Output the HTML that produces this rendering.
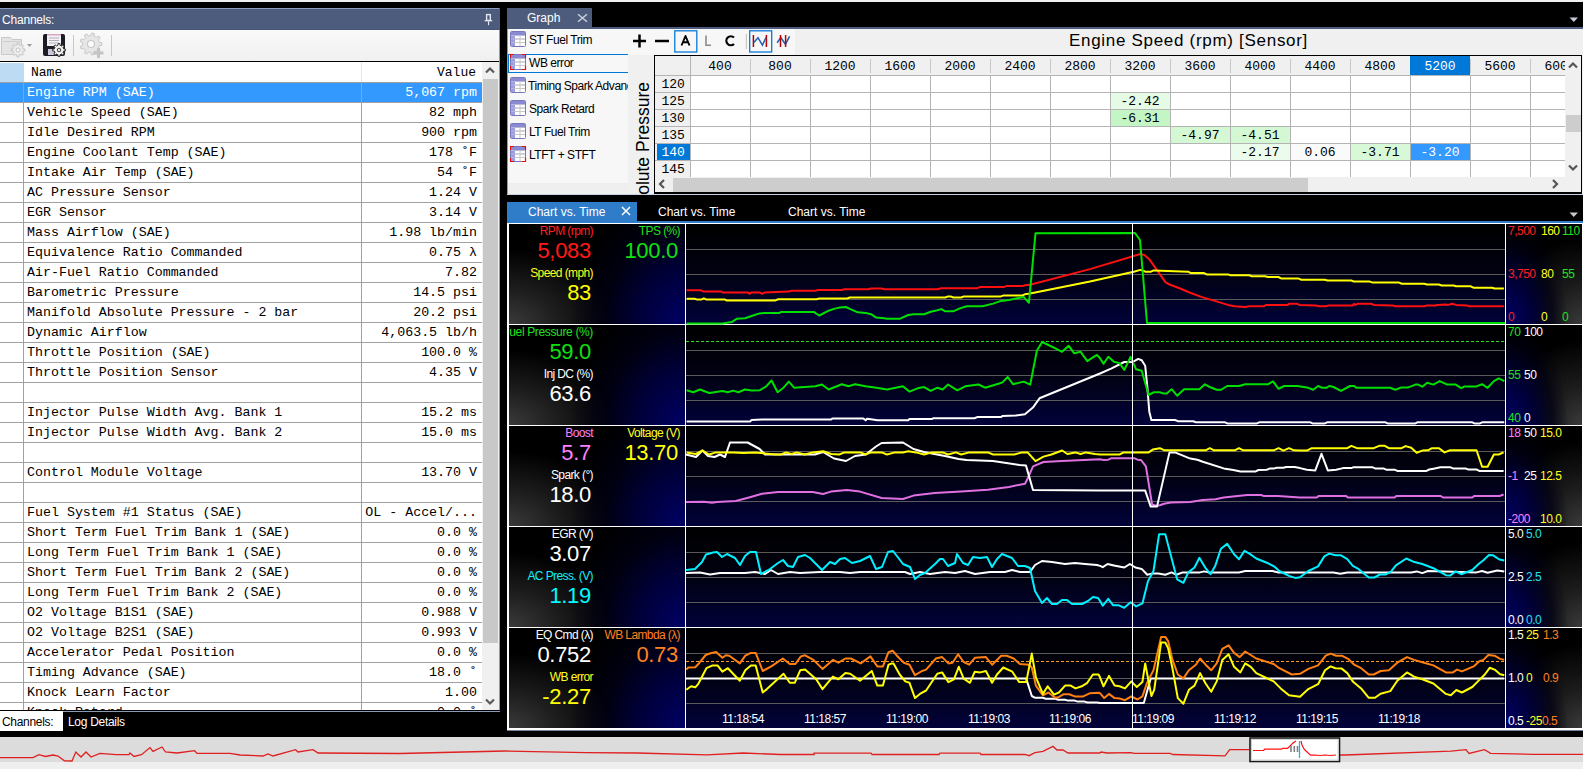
<!DOCTYPE html><html><head><meta charset="utf-8"><style>
*{margin:0;padding:0;box-sizing:border-box}
html,body{width:1583px;height:769px;overflow:hidden;background:#000;font-family:"Liberation Sans", sans-serif}
.abs{position:absolute}
.t{position:absolute;white-space:nowrap;line-height:1}
.mono{font-family:"Liberation Mono", monospace}
</style></head><body>

<div class="abs" style="left:0px;top:0px;width:1583px;height:2px;background:#f0f0f0"></div>
<div class="abs" style="left:0px;top:8px;width:500px;height:22px;background:#4d5c7c"></div>
<div class="abs" style="left:0px;top:8px;width:499px;height:1px;background:#8b9cc0"></div>
<div class="abs" style="left:0px;top:29px;width:499px;height:1px;background:#45557a"></div>
<div class="t" style="left:2px;top:14px;font-size:12px;color:#fff;letter-spacing:-0.2px">Channels:</div>
<svg class="abs" style="left:483px;top:12px" width="12" height="14" viewBox="0 0 12 14"><rect x="3.6" y="2.6" width="3.7" height="5.8" fill="none" stroke="#e2e6f0" stroke-width="1.4"/><rect x="1.7" y="8" width="7.5" height="1.3" fill="#e2e6f0"/><rect x="5" y="9.2" width="1.1" height="4" fill="#e2e6f0"/></svg>
<div class="abs" style="left:0px;top:30px;width:500px;height:31px;background:linear-gradient(#fafafa,#f0f0f0)"></div>
<svg class="abs" style="left:0;top:28px" width="120" height="34" viewBox="0 0 120 34">
<path d="M1.5 9.5h9l2 2h9v15h-20z" fill="#e4e4e4" stroke="#c8c8c8"/>
<path d="M1.5 13.5h20" stroke="#d0d0d0"/>
<path d="M23.08,20.89 L24.93,21.04 L24.93,22.96 L23.08,23.11 L22.38,24.80 L23.58,26.22 L22.22,27.58 L20.80,26.38 L19.11,27.08 L18.96,28.93 L17.04,28.93 L16.89,27.08 L15.20,26.38 L13.78,27.58 L12.42,26.22 L13.62,24.80 L12.92,23.11 L11.07,22.96 L11.07,21.04 L12.92,20.89 L13.62,19.20 L12.42,17.78 L13.78,16.42 L15.20,17.62 L16.89,16.92 L17.04,15.07 L18.96,15.07 L19.11,16.92 L20.80,17.62 L22.22,16.42 L23.58,17.78 L22.38,19.20Z" fill="#ececec" stroke="#c4c4c4" stroke-width="1"/><circle cx="18" cy="22" r="2" fill="#fafafa" stroke="#c4c4c4"/>
<path d="M27 16h5l-2.5 3z" fill="#9a9a9a"/>
<rect x="43" y="6" width="22" height="22" rx="2" fill="#1c1c24"/>
<rect x="47" y="6" width="14" height="12" fill="#f2f2f6"/>
<rect x="47" y="6" width="14" height="1.5" fill="#d8a8c0"/>
<path d="M49 10h10M49 12.5h10M49 15h10" stroke="#a8a8b0" stroke-width="0.9"/>
<rect x="48" y="21" width="6" height="6" fill="#c8c8d8"/>
<path d="M63.69,20.97 L65.44,21.11 L65.44,22.89 L63.69,23.03 L63.04,24.59 L64.18,25.92 L62.92,27.18 L61.59,26.04 L60.03,26.69 L59.89,28.44 L58.11,28.44 L57.97,26.69 L56.41,26.04 L55.08,27.18 L53.82,25.92 L54.96,24.59 L54.31,23.03 L52.56,22.89 L52.56,21.11 L54.31,20.97 L54.96,19.41 L53.82,18.08 L55.08,16.82 L56.41,17.96 L57.97,17.31 L58.11,15.56 L59.89,15.56 L60.03,17.31 L61.59,17.96 L62.92,16.82 L64.18,18.08 L63.04,19.41Z" fill="#f4f4f4" stroke="#333" stroke-width="1"/><circle cx="59" cy="22" r="1.8" fill="#ddd" stroke="#333" stroke-width="0.9"/>
<path d="M73.5 7v21" stroke="#c8c8c8"/>
<path d="M99.34,14.38 L101.92,14.66 L101.92,17.34 L99.34,17.62 L98.43,20.12 L100.23,21.99 L98.50,24.04 L96.35,22.61 L94.05,23.94 L94.22,26.52 L91.58,26.98 L90.85,24.50 L88.23,24.04 L86.70,26.13 L84.38,24.78 L85.42,22.42 L83.71,20.38 L81.20,20.99 L80.28,18.47 L82.60,17.33 L82.60,14.67 L80.28,13.53 L81.20,11.01 L83.71,11.62 L85.42,9.58 L84.38,7.22 L86.70,5.87 L88.23,7.96 L90.85,7.50 L91.58,5.02 L94.22,5.48 L94.05,8.06 L96.35,9.39 L98.50,7.96 L100.23,10.01 L98.43,11.88Z" fill="#e6e6e6" stroke="#c8c8c8" stroke-width="1"/>
<circle cx="91" cy="16" r="3.5" fill="#fbfbfb" stroke="#c8c8c8" stroke-width="1.2"/>
<path d="M98.5 20v10M93.5 25h10" stroke="#c4c4c4" stroke-width="3"/>
<path d="M111.5 7v21" stroke="#c8c8c8"/>
</svg>
<div class="abs" style="left:0px;top:61px;width:500px;height:1px;background:#000"></div>
<div class="abs" style="left:0px;top:62px;width:482px;height:648px;background:#fff"></div>
<div class="abs" style="left:0px;top:63px;width:24px;height:19px;background:#bddcf4"></div>
<div class="t mono" style="left:31px;top:66px;font-size:13px;color:#000;">Name</div>
<div class="t mono" style="right:1107px;top:66px;font-size:13px;color:#000;text-align:right;">Value</div>
<div class="abs" style="left:361px;top:62px;width:1px;height:20px;background:#e6e6e6"></div>
<div class="abs" style="left:0;top:82px;width:482px;height:628px;overflow:hidden">
<div class="abs" style="left:0px;top:1px;width:482px;height:19px;background:#3399ff"></div>
<div class="abs" style="left:0;top:0px;width:482px;height:1px;background:#a0a0a0"></div>
<div class="t mono" style="left:27px;top:4px;font-size:13.3px;color:#fff">Engine RPM (SAE)</div>
<div class="t mono" style="right:5px;top:4px;font-size:13.3px;color:#fff">5,067 rpm</div>
<div class="abs" style="left:0;top:20px;width:482px;height:1px;background:#a0a0a0"></div>
<div class="t mono" style="left:27px;top:24px;font-size:13.3px;color:#000">Vehicle Speed (SAE)</div>
<div class="t mono" style="right:5px;top:24px;font-size:13.3px;color:#000">82 mph</div>
<div class="abs" style="left:0;top:40px;width:482px;height:1px;background:#a0a0a0"></div>
<div class="t mono" style="left:27px;top:44px;font-size:13.3px;color:#000">Idle Desired RPM</div>
<div class="t mono" style="right:5px;top:44px;font-size:13.3px;color:#000">900 rpm</div>
<div class="abs" style="left:0;top:60px;width:482px;height:1px;background:#a0a0a0"></div>
<div class="t mono" style="left:27px;top:64px;font-size:13.3px;color:#000">Engine Coolant Temp (SAE)</div>
<div class="t mono" style="right:5px;top:64px;font-size:13.3px;color:#000">178 &#730;F</div>
<div class="abs" style="left:0;top:80px;width:482px;height:1px;background:#a0a0a0"></div>
<div class="t mono" style="left:27px;top:84px;font-size:13.3px;color:#000">Intake Air Temp (SAE)</div>
<div class="t mono" style="right:5px;top:84px;font-size:13.3px;color:#000">54 &#730;F</div>
<div class="abs" style="left:0;top:100px;width:482px;height:1px;background:#a0a0a0"></div>
<div class="t mono" style="left:27px;top:104px;font-size:13.3px;color:#000">AC Pressure Sensor</div>
<div class="t mono" style="right:5px;top:104px;font-size:13.3px;color:#000">1.24 V</div>
<div class="abs" style="left:0;top:120px;width:482px;height:1px;background:#a0a0a0"></div>
<div class="t mono" style="left:27px;top:124px;font-size:13.3px;color:#000">EGR Sensor</div>
<div class="t mono" style="right:5px;top:124px;font-size:13.3px;color:#000">3.14 V</div>
<div class="abs" style="left:0;top:140px;width:482px;height:1px;background:#a0a0a0"></div>
<div class="t mono" style="left:27px;top:144px;font-size:13.3px;color:#000">Mass Airflow (SAE)</div>
<div class="t mono" style="right:5px;top:144px;font-size:13.3px;color:#000">1.98 lb/min</div>
<div class="abs" style="left:0;top:160px;width:482px;height:1px;background:#a0a0a0"></div>
<div class="t mono" style="left:27px;top:164px;font-size:13.3px;color:#000">Equivalence Ratio Commanded</div>
<div class="t mono" style="right:5px;top:164px;font-size:13.3px;color:#000">0.75 &#955;</div>
<div class="abs" style="left:0;top:180px;width:482px;height:1px;background:#a0a0a0"></div>
<div class="t mono" style="left:27px;top:184px;font-size:13.3px;color:#000">Air-Fuel Ratio Commanded</div>
<div class="t mono" style="right:5px;top:184px;font-size:13.3px;color:#000">7.82</div>
<div class="abs" style="left:0;top:200px;width:482px;height:1px;background:#a0a0a0"></div>
<div class="t mono" style="left:27px;top:204px;font-size:13.3px;color:#000">Barometric Pressure</div>
<div class="t mono" style="right:5px;top:204px;font-size:13.3px;color:#000">14.5 psi</div>
<div class="abs" style="left:0;top:220px;width:482px;height:1px;background:#a0a0a0"></div>
<div class="t mono" style="left:27px;top:224px;font-size:13.3px;color:#000">Manifold Absolute Pressure - 2 bar</div>
<div class="t mono" style="right:5px;top:224px;font-size:13.3px;color:#000">20.2 psi</div>
<div class="abs" style="left:0;top:240px;width:482px;height:1px;background:#a0a0a0"></div>
<div class="t mono" style="left:27px;top:244px;font-size:13.3px;color:#000">Dynamic Airflow</div>
<div class="t mono" style="right:5px;top:244px;font-size:13.3px;color:#000">4,063.5 lb/h</div>
<div class="abs" style="left:0;top:260px;width:482px;height:1px;background:#a0a0a0"></div>
<div class="t mono" style="left:27px;top:264px;font-size:13.3px;color:#000">Throttle Position (SAE)</div>
<div class="t mono" style="right:5px;top:264px;font-size:13.3px;color:#000">100.0 %</div>
<div class="abs" style="left:0;top:280px;width:482px;height:1px;background:#a0a0a0"></div>
<div class="t mono" style="left:27px;top:284px;font-size:13.3px;color:#000">Throttle Position Sensor</div>
<div class="t mono" style="right:5px;top:284px;font-size:13.3px;color:#000">4.35 V</div>
<div class="abs" style="left:0;top:300px;width:482px;height:1px;background:#a0a0a0"></div>
<div class="abs" style="left:0;top:320px;width:482px;height:1px;background:#a0a0a0"></div>
<div class="t mono" style="left:27px;top:324px;font-size:13.3px;color:#000">Injector Pulse Width Avg. Bank 1</div>
<div class="t mono" style="right:5px;top:324px;font-size:13.3px;color:#000">15.2 ms</div>
<div class="abs" style="left:0;top:340px;width:482px;height:1px;background:#a0a0a0"></div>
<div class="t mono" style="left:27px;top:344px;font-size:13.3px;color:#000">Injector Pulse Width Avg. Bank 2</div>
<div class="t mono" style="right:5px;top:344px;font-size:13.3px;color:#000">15.0 ms</div>
<div class="abs" style="left:0;top:360px;width:482px;height:1px;background:#a0a0a0"></div>
<div class="abs" style="left:0;top:380px;width:482px;height:1px;background:#a0a0a0"></div>
<div class="t mono" style="left:27px;top:384px;font-size:13.3px;color:#000">Control Module Voltage</div>
<div class="t mono" style="right:5px;top:384px;font-size:13.3px;color:#000">13.70 V</div>
<div class="abs" style="left:0;top:400px;width:482px;height:1px;background:#a0a0a0"></div>
<div class="abs" style="left:0;top:420px;width:482px;height:1px;background:#a0a0a0"></div>
<div class="t mono" style="left:27px;top:424px;font-size:13.3px;color:#000">Fuel System #1 Status (SAE)</div>
<div class="t mono" style="right:5px;top:424px;font-size:13.3px;color:#000">OL - Accel/...</div>
<div class="abs" style="left:0;top:440px;width:482px;height:1px;background:#a0a0a0"></div>
<div class="t mono" style="left:27px;top:444px;font-size:13.3px;color:#000">Short Term Fuel Trim Bank 1 (SAE)</div>
<div class="t mono" style="right:5px;top:444px;font-size:13.3px;color:#000">0.0 %</div>
<div class="abs" style="left:0;top:460px;width:482px;height:1px;background:#a0a0a0"></div>
<div class="t mono" style="left:27px;top:464px;font-size:13.3px;color:#000">Long Term Fuel Trim Bank 1 (SAE)</div>
<div class="t mono" style="right:5px;top:464px;font-size:13.3px;color:#000">0.0 %</div>
<div class="abs" style="left:0;top:480px;width:482px;height:1px;background:#a0a0a0"></div>
<div class="t mono" style="left:27px;top:484px;font-size:13.3px;color:#000">Short Term Fuel Trim Bank 2 (SAE)</div>
<div class="t mono" style="right:5px;top:484px;font-size:13.3px;color:#000">0.0 %</div>
<div class="abs" style="left:0;top:500px;width:482px;height:1px;background:#a0a0a0"></div>
<div class="t mono" style="left:27px;top:504px;font-size:13.3px;color:#000">Long Term Fuel Trim Bank 2 (SAE)</div>
<div class="t mono" style="right:5px;top:504px;font-size:13.3px;color:#000">0.0 %</div>
<div class="abs" style="left:0;top:520px;width:482px;height:1px;background:#a0a0a0"></div>
<div class="t mono" style="left:27px;top:524px;font-size:13.3px;color:#000">O2 Voltage B1S1 (SAE)</div>
<div class="t mono" style="right:5px;top:524px;font-size:13.3px;color:#000">0.988 V</div>
<div class="abs" style="left:0;top:540px;width:482px;height:1px;background:#a0a0a0"></div>
<div class="t mono" style="left:27px;top:544px;font-size:13.3px;color:#000">O2 Voltage B2S1 (SAE)</div>
<div class="t mono" style="right:5px;top:544px;font-size:13.3px;color:#000">0.993 V</div>
<div class="abs" style="left:0;top:560px;width:482px;height:1px;background:#a0a0a0"></div>
<div class="t mono" style="left:27px;top:564px;font-size:13.3px;color:#000">Accelerator Pedal Position</div>
<div class="t mono" style="right:5px;top:564px;font-size:13.3px;color:#000">0.0 %</div>
<div class="abs" style="left:0;top:580px;width:482px;height:1px;background:#a0a0a0"></div>
<div class="t mono" style="left:27px;top:584px;font-size:13.3px;color:#000">Timing Advance (SAE)</div>
<div class="t mono" style="right:5px;top:584px;font-size:13.3px;color:#000">18.0 &#730;</div>
<div class="abs" style="left:0;top:600px;width:482px;height:1px;background:#a0a0a0"></div>
<div class="t mono" style="left:27px;top:604px;font-size:13.3px;color:#000">Knock Learn Factor</div>
<div class="t mono" style="right:5px;top:604px;font-size:13.3px;color:#000">1.00</div>
<div class="abs" style="left:0;top:620px;width:482px;height:1px;background:#a0a0a0"></div>
<div class="t mono" style="left:27px;top:624px;font-size:13.3px;color:#000">Knock Retard</div>
<div class="t mono" style="right:5px;top:624px;font-size:13.3px;color:#000">0.0 &#730;</div>
<div class="abs" style="left:23px;top:0;width:1px;height:628px;background:#a0a0a0"></div>
<div class="abs" style="left:361px;top:0;width:1px;height:628px;background:#a0a0a0"></div>
</div>
<div class="abs" style="left:482px;top:62px;width:17px;height:648px;background:#f0f0f0"></div>
<div class="abs" style="left:483px;top:79px;width:15px;height:564px;background:#c8c8c8"></div>
<svg class="abs" style="left:484px;top:66px" width="12" height="8"><path d="M2 6.5l4-4 4 4" stroke="#5a5a5a" stroke-width="2.2" fill="none"/></svg>
<svg class="abs" style="left:484px;top:698px" width="12" height="8"><path d="M2 1.5l4 4 4-4" stroke="#5a5a5a" stroke-width="2.2" fill="none"/></svg>
<div class="abs" style="left:499px;top:30px;width:1px;height:681px;background:#8c9bb5"></div>
<div class="abs" style="left:0px;top:710px;width:500px;height:1px;background:#000"></div>
<div class="abs" style="left:63px;top:711px;width:437px;height:1px;background:#8c9bb5"></div>
<div class="abs" style="left:0px;top:712px;width:500px;height:25px;background:#000"></div>
<div class="abs" style="left:0px;top:711px;width:63px;height:20px;background:#fff"></div>
<div class="t" style="left:2px;top:716px;font-size:12px;color:#000;letter-spacing:-0.3px">Channels:</div>
<div class="t" style="left:68px;top:716px;font-size:12px;color:#fff;letter-spacing:-0.3px">Log Details</div>
<div class="abs" style="left:0px;top:737px;width:1583px;height:25px;background:#dcdcdc"></div>
<div class="abs" style="left:0px;top:762px;width:1583px;height:7px;background:#efefef"></div>
<svg class="abs" style="left:0;top:0" width="1583" height="769"><polyline points="0,757.7 33,757.7 39,754.7 45.5,756.5 53,755 58,756 64.4,760.8 72,761 75.8,752 81,757 86,752 91,757 100,753.4 116,754.7 129,754.7 130,753 134,756.5 141.5,754.7 150,747.6 153,751.4 162,747 165.5,752 177,753 194.6,750.7 197,753.4 230,753.4 240,755 263,756 268,754 273,756 295.6,749.7 298,752 313,749.7 318,753 400,753.5 505,751 586,752.7 637,753 707,754.8 743,753 780,754.5 814,754.5 814,753.2 871,753.2 872,754.5 939,754.5 940,753.2 980,753.2 981,754.5 1025,754.5 1029,755.7 1035,752.7 1043,751.4 1053,746.4 1057,750 1063,750 1068,753 1100,753 1101,752 1107,753 1131,752.7 1134,753.4 1170,753.4 1173,754.5 1225,755.8 1229.7,749.7 1249,749.7" fill="none" stroke="#e02020" stroke-width="1.3"/><polyline points="1339,755 1345,755 1451,751.2 1466,749.7 1469,753.4 1484.5,749.7 1490.6,753.4 1533,754.3 1583,754.3" fill="none" stroke="#e02020" stroke-width="1.3"/>
<rect x="1250" y="738" width="89.5" height="23.5" fill="#fff" stroke="#1a1a1a" stroke-width="1.6"/><rect x="1251.5" y="739.5" width="86.5" height="20.5" fill="none" stroke="#d4d4d4" stroke-width="1"/>
<polyline points="1253,750.5 1263.7,750.5 1264.5,749.2 1281.7,749.2 1282.5,748.4 1287.5,748.4 1293,743 1296,741" fill="none" stroke="#ff1010" stroke-width="1.2"/><polyline points="1301,741 1302,745 1304,749 1306,751 1310.5,755.2 1315,755 1320,755.5 1325,755 1330,755.5 1336,755" fill="none" stroke="#ff1010" stroke-width="1.2"/>
<path d="M1291 746v6M1294.3 746v6M1297.5 746v6" stroke="#808080" stroke-width="1.6"/><path d="M1299.5 741v17" stroke="#20b0f0" stroke-width="1.3"/>
</svg>
<div class="abs" style="left:507px;top:8px;width:85px;height:19px;background:#4d5c7c"></div>
<div class="t" style="left:527px;top:12px;font-size:12px;color:#fff;">Graph</div>
<svg class="abs" style="left:576.5px;top:13px" width="11" height="10"><path d="M1 1.2l9 7.6M10 1.2l-9 7.6" stroke="#c8cfdc" stroke-width="1.5"/></svg>
<svg class="abs" style="left:1569px;top:17px" width="10" height="6"><path d="M0.5 0.5h8.5l-4.25 4.5z" fill="#c4cbd8"/></svg>
<div class="abs" style="left:507px;top:27px;width:1076px;height:2px;background:#4d5c7c"></div>
<div class="abs" style="left:507px;top:29px;width:1076px;height:166px;background:#f0f0f0"></div>
<div class="abs" style="left:508px;top:29px;width:120px;height:166px;background:#f7f7f7"></div>
<div class="abs" style="left:508px;top:183px;width:120px;height:12px;background:#efefef"></div>
<div class="abs" style="left:508px;top:29px;width:120px;height:166px;overflow:hidden">
<svg class="abs" style="left:2px;top:2px" width="17" height="16" viewBox="0 0 17 16"><rect x="0.5" y="0.5" width="15" height="15" rx="1" fill="#fff" stroke="#7878b8"/><rect x="1" y="1" width="14" height="3" fill="#8a8ad4"/><rect x="1" y="4" width="4" height="11" fill="#9c9ce0"/><path d="M1 4.5h14M1 8h14M1 11.5h14" stroke="#b8b8d8"/><path d="M5 8h10M5 11.5h10M10 4v11" stroke="#c8c8c8"/></svg>
<div class="t" style="left:21px;top:5px;font-size:12px;color:#000;letter-spacing:-0.45px">ST Fuel Trim</div>
<div class="abs" style="left:0;top:25px;width:130px;height:19px;border:1px solid #0078d7;border-right:none"></div>
<svg class="abs" style="left:2px;top:25px" width="17" height="16" viewBox="0 0 17 16"><rect x="0.5" y="0.5" width="15" height="15" rx="1" fill="#fff" stroke="#7878b8"/><rect x="1" y="1" width="14" height="3" fill="#8a8ad4"/><rect x="1" y="4" width="4" height="11" fill="#9c9ce0"/><path d="M1 4.5h14M1 8h14M1 11.5h14" stroke="#b8b8d8"/><path d="M5 8h10M5 11.5h10M10 4v11" stroke="#c8c8c8"/><path d="M0.5 4V0.5H4M12 0.5h3.5V4M0.5 12v3.5H4M12 15.5h3.5V12" stroke="#e01010" stroke-width="1.2" fill="none"/></svg>
<div class="t" style="left:21px;top:28px;font-size:12px;color:#000;letter-spacing:-0.45px">WB error</div>
<svg class="abs" style="left:2px;top:48px" width="17" height="16" viewBox="0 0 17 16"><rect x="0.5" y="0.5" width="15" height="15" rx="1" fill="#fff" stroke="#7878b8"/><rect x="1" y="1" width="14" height="3" fill="#8a8ad4"/><rect x="1" y="4" width="4" height="11" fill="#9c9ce0"/><path d="M1 4.5h14M1 8h14M1 11.5h14" stroke="#b8b8d8"/><path d="M5 8h10M5 11.5h10M10 4v11" stroke="#c8c8c8"/></svg>
<div class="t" style="left:20px;top:51px;font-size:12px;color:#000;letter-spacing:-0.45px">Timing Spark Advance</div>
<svg class="abs" style="left:2px;top:71px" width="17" height="16" viewBox="0 0 17 16"><rect x="0.5" y="0.5" width="15" height="15" rx="1" fill="#fff" stroke="#7878b8"/><rect x="1" y="1" width="14" height="3" fill="#8a8ad4"/><rect x="1" y="4" width="4" height="11" fill="#9c9ce0"/><path d="M1 4.5h14M1 8h14M1 11.5h14" stroke="#b8b8d8"/><path d="M5 8h10M5 11.5h10M10 4v11" stroke="#c8c8c8"/></svg>
<div class="t" style="left:21px;top:74px;font-size:12px;color:#000;letter-spacing:-0.45px">Spark Retard</div>
<svg class="abs" style="left:2px;top:94px" width="17" height="16" viewBox="0 0 17 16"><rect x="0.5" y="0.5" width="15" height="15" rx="1" fill="#fff" stroke="#7878b8"/><rect x="1" y="1" width="14" height="3" fill="#8a8ad4"/><rect x="1" y="4" width="4" height="11" fill="#9c9ce0"/><path d="M1 4.5h14M1 8h14M1 11.5h14" stroke="#b8b8d8"/><path d="M5 8h10M5 11.5h10M10 4v11" stroke="#c8c8c8"/></svg>
<div class="t" style="left:21px;top:97px;font-size:12px;color:#000;letter-spacing:-0.45px">LT Fuel Trim</div>
<svg class="abs" style="left:2px;top:117px" width="17" height="16" viewBox="0 0 17 16"><rect x="0.5" y="0.5" width="15" height="15" rx="1" fill="#fff" stroke="#7878b8"/><rect x="1" y="1" width="14" height="3" fill="#8a8ad4"/><rect x="1" y="4" width="4" height="11" fill="#9c9ce0"/><path d="M1 4.5h14M1 8h14M1 11.5h14" stroke="#b8b8d8"/><path d="M5 8h10M5 11.5h10M10 4v11" stroke="#c8c8c8"/><path d="M0.5 4V0.5H4M12 0.5h3.5V4M0.5 12v3.5H4M12 15.5h3.5V12" stroke="#e01010" stroke-width="1.2" fill="none"/></svg>
<div class="t" style="left:21px;top:120px;font-size:12px;color:#000;letter-spacing:-0.45px">LTFT + STFT</div>
</div>
<div class="abs" style="left:628px;top:29px;width:167px;height:26px;background:#f7f7f7"></div>
<svg class="abs" style="left:628px;top:29px" width="170" height="26" viewBox="0 0 170 26">
<path d="M5 12h13M11.5 5.5v13" stroke="#000" stroke-width="2.5"/>
<path d="M27 12h14" stroke="#000" stroke-width="2.5"/>
<rect x="46.8" y="1.8" width="22" height="21.2" fill="none" stroke="#0a78d8" stroke-width="1.3"/>
<path d="M53.5 16.5l4-9.5 4 9.5M55.2 13.3h4.6" stroke="#000" stroke-width="1.9" fill="none" stroke-linejoin="round"/>
<path d="M78 6.5v9.8h5" stroke="#8a8a8a" stroke-width="1.6" fill="none"/>
<path d="M106 8.5a4.5 4.5 0 1 0 0 6.5" stroke="#000" stroke-width="2.2" fill="none"/>
<path d="M118.4 5v15" stroke="#c8c8c8" stroke-width="1.2"/>
<rect x="121.7" y="1.8" width="22" height="21.2" fill="none" stroke="#0a78d8" stroke-width="1.3"/>
<path d="M125.4 6v12M138.4 6v12" stroke="#b00000" stroke-width="1.5"/><path d="M125.8 13.4L130 8.7L134.4 16.2L138 8.5" stroke="#2060b0" stroke-width="1.5" fill="none"/>
<path d="M149.1 13.7L152.8 8.5L157.4 15.2L161.6 7.3" stroke="#2060b0" stroke-width="1.5" fill="none"/><path d="M152.5 6v12M157.6 6v12" stroke="#c00000" stroke-width="1.5"/>
</svg>
<div class="t" style="left:795px;top:31.8px;width:787px;text-align:center;font-size:17px;color:#000;letter-spacing:0.7px">Engine Speed (rpm) [Sensor]</div>
<div class="abs" style="left:628px;top:55px;width:26px;height:140px;overflow:hidden"><div class="t" style="left:7.4px;top:427px;width:400px;text-align:right;font-size:17.5px;color:#000;transform-origin:0 0;transform:rotate(-90deg)">Manifold Absolute Pressure</div></div>
<div class="abs" style="left:654px;top:55px;width:928px;height:139px;background:#000"></div>
<div class="abs" style="left:655px;top:56px;width:910px;height:121px;background:#fff"></div>
<div class="abs" style="left:655px;top:56px;width:910px;height:20px;background:#f0f0f0"></div>
<div class="abs" style="left:655px;top:76px;width:35px;height:101px;background:#f0f0f0"></div>
<div class="abs" style="left:655px;top:56px;width:910px;height:121px;overflow:hidden">
<div class="abs" style="left:455px;top:37px;width:60px;height:17px;background:#e6fbe6"></div>
<div class="t mono" style="left:455px;top:39px;width:60px;text-align:center;font-size:13px;color:#000">-2.42</div>
<div class="abs" style="left:455px;top:54px;width:60px;height:17px;background:#c4f5c4"></div>
<div class="t mono" style="left:455px;top:56px;width:60px;text-align:center;font-size:13px;color:#000">-6.31</div>
<div class="abs" style="left:515px;top:71px;width:60px;height:17px;background:#d4f8d4"></div>
<div class="t mono" style="left:515px;top:73px;width:60px;text-align:center;font-size:13px;color:#000">-4.97</div>
<div class="abs" style="left:575px;top:71px;width:60px;height:17px;background:#d4f8d4"></div>
<div class="t mono" style="left:575px;top:73px;width:60px;text-align:center;font-size:13px;color:#000">-4.51</div>
<div class="abs" style="left:575px;top:88px;width:60px;height:17px;background:#ecfcec"></div>
<div class="t mono" style="left:575px;top:90px;width:60px;text-align:center;font-size:13px;color:#000">-2.17</div>
<div class="abs" style="left:635px;top:88px;width:60px;height:17px;background:#fafafa"></div>
<div class="t mono" style="left:635px;top:90px;width:60px;text-align:center;font-size:13px;color:#000">0.06</div>
<div class="abs" style="left:695px;top:88px;width:60px;height:17px;background:#d8f9d8"></div>
<div class="t mono" style="left:695px;top:90px;width:60px;text-align:center;font-size:13px;color:#000">-3.71</div>
<div class="abs" style="left:755px;top:88px;width:60px;height:17px;background:#3399ff"></div>
<div class="t mono" style="left:755px;top:90px;width:60px;text-align:center;font-size:13px;color:#fff">-3.20</div>
<div class="t mono" style="left:35px;top:4px;width:60px;text-align:center;font-size:13px;color:#000">400</div>
<div class="abs" style="left:95px;top:3px;width:1px;height:14px;background:#c8c8c8"></div>
<div class="abs" style="left:95px;top:20px;width:1px;height:101px;background:#b4b4b4"></div>
<div class="t mono" style="left:95px;top:4px;width:60px;text-align:center;font-size:13px;color:#000">800</div>
<div class="abs" style="left:155px;top:3px;width:1px;height:14px;background:#c8c8c8"></div>
<div class="abs" style="left:155px;top:20px;width:1px;height:101px;background:#b4b4b4"></div>
<div class="t mono" style="left:155px;top:4px;width:60px;text-align:center;font-size:13px;color:#000">1200</div>
<div class="abs" style="left:215px;top:3px;width:1px;height:14px;background:#c8c8c8"></div>
<div class="abs" style="left:215px;top:20px;width:1px;height:101px;background:#b4b4b4"></div>
<div class="t mono" style="left:215px;top:4px;width:60px;text-align:center;font-size:13px;color:#000">1600</div>
<div class="abs" style="left:275px;top:3px;width:1px;height:14px;background:#c8c8c8"></div>
<div class="abs" style="left:275px;top:20px;width:1px;height:101px;background:#b4b4b4"></div>
<div class="t mono" style="left:275px;top:4px;width:60px;text-align:center;font-size:13px;color:#000">2000</div>
<div class="abs" style="left:335px;top:3px;width:1px;height:14px;background:#c8c8c8"></div>
<div class="abs" style="left:335px;top:20px;width:1px;height:101px;background:#b4b4b4"></div>
<div class="t mono" style="left:335px;top:4px;width:60px;text-align:center;font-size:13px;color:#000">2400</div>
<div class="abs" style="left:395px;top:3px;width:1px;height:14px;background:#c8c8c8"></div>
<div class="abs" style="left:395px;top:20px;width:1px;height:101px;background:#b4b4b4"></div>
<div class="t mono" style="left:395px;top:4px;width:60px;text-align:center;font-size:13px;color:#000">2800</div>
<div class="abs" style="left:455px;top:3px;width:1px;height:14px;background:#c8c8c8"></div>
<div class="abs" style="left:455px;top:20px;width:1px;height:101px;background:#b4b4b4"></div>
<div class="t mono" style="left:455px;top:4px;width:60px;text-align:center;font-size:13px;color:#000">3200</div>
<div class="abs" style="left:515px;top:3px;width:1px;height:14px;background:#c8c8c8"></div>
<div class="abs" style="left:515px;top:20px;width:1px;height:101px;background:#b4b4b4"></div>
<div class="t mono" style="left:515px;top:4px;width:60px;text-align:center;font-size:13px;color:#000">3600</div>
<div class="abs" style="left:575px;top:3px;width:1px;height:14px;background:#c8c8c8"></div>
<div class="abs" style="left:575px;top:20px;width:1px;height:101px;background:#b4b4b4"></div>
<div class="t mono" style="left:575px;top:4px;width:60px;text-align:center;font-size:13px;color:#000">4000</div>
<div class="abs" style="left:635px;top:3px;width:1px;height:14px;background:#c8c8c8"></div>
<div class="abs" style="left:635px;top:20px;width:1px;height:101px;background:#b4b4b4"></div>
<div class="t mono" style="left:635px;top:4px;width:60px;text-align:center;font-size:13px;color:#000">4400</div>
<div class="abs" style="left:695px;top:3px;width:1px;height:14px;background:#c8c8c8"></div>
<div class="abs" style="left:695px;top:20px;width:1px;height:101px;background:#b4b4b4"></div>
<div class="t mono" style="left:695px;top:4px;width:60px;text-align:center;font-size:13px;color:#000">4800</div>
<div class="abs" style="left:755px;top:3px;width:1px;height:14px;background:#c8c8c8"></div>
<div class="abs" style="left:755px;top:20px;width:1px;height:101px;background:#b4b4b4"></div>
<div class="abs" style="left:755px;top:0;width:60px;height:20px;background:#0078d7"></div>
<div class="t mono" style="left:755px;top:4px;width:60px;text-align:center;font-size:13px;color:#fff">5200</div>
<div class="abs" style="left:815px;top:3px;width:1px;height:14px;background:#c8c8c8"></div>
<div class="abs" style="left:815px;top:20px;width:1px;height:101px;background:#b4b4b4"></div>
<div class="t mono" style="left:815px;top:4px;width:60px;text-align:center;font-size:13px;color:#000">5600</div>
<div class="abs" style="left:875px;top:3px;width:1px;height:14px;background:#c8c8c8"></div>
<div class="abs" style="left:875px;top:20px;width:1px;height:101px;background:#b4b4b4"></div>
<div class="t mono" style="left:875px;top:4px;width:60px;text-align:center;font-size:13px;color:#000">6000</div>
<div class="abs" style="left:935px;top:3px;width:1px;height:14px;background:#c8c8c8"></div>
<div class="abs" style="left:935px;top:20px;width:1px;height:101px;background:#b4b4b4"></div>
<div class="t mono" style="left:6.5px;top:22px;font-size:13px;color:#000">120</div>
<div class="abs" style="left:0;top:36px;width:910px;height:1px;background:#b4b4b4"></div>
<div class="t mono" style="left:6.5px;top:39px;font-size:13px;color:#000">125</div>
<div class="abs" style="left:0;top:53px;width:910px;height:1px;background:#b4b4b4"></div>
<div class="t mono" style="left:6.5px;top:56px;font-size:13px;color:#000">130</div>
<div class="abs" style="left:0;top:70px;width:910px;height:1px;background:#b4b4b4"></div>
<div class="t mono" style="left:6.5px;top:73px;font-size:13px;color:#000">135</div>
<div class="abs" style="left:0;top:87px;width:910px;height:1px;background:#b4b4b4"></div>
<div class="abs" style="left:2px;top:88px;width:33px;height:17px;background:#0078d7"></div>
<div class="t mono" style="left:6.5px;top:90px;font-size:13px;color:#fff">140</div>
<div class="abs" style="left:0;top:104px;width:910px;height:1px;background:#b4b4b4"></div>
<div class="t mono" style="left:6.5px;top:107px;font-size:13px;color:#000">145</div>
<div class="abs" style="left:0;top:121px;width:910px;height:1px;background:#b4b4b4"></div>
<div class="abs" style="left:0;top:19px;width:910px;height:1px;background:#b4b4b4"></div>
<div class="abs" style="left:35px;top:0;width:1px;height:121px;background:#b4b4b4"></div>
</div>
<div class="abs" style="left:1565px;top:56px;width:16px;height:121px;background:#f0f0f0"></div>
<div class="abs" style="left:1566px;top:115px;width:15px;height:17px;background:#cdcdcd"></div>
<svg class="abs" style="left:1567px;top:61px" width="12" height="8"><path d="M2 6.5l4-4 4 4" stroke="#555" stroke-width="2.2" fill="none"/></svg>
<svg class="abs" style="left:1567px;top:164px" width="12" height="8"><path d="M2 1.5l4 4 4-4" stroke="#555" stroke-width="2.2" fill="none"/></svg>
<div class="abs" style="left:655px;top:177px;width:926px;height:15px;background:#f0f0f0"></div>
<div class="abs" style="left:673px;top:178px;width:635px;height:14px;background:#cdcdcd"></div>
<svg class="abs" style="left:657px;top:179px" width="10" height="10"><path d="M7 1L3 5l4 4" stroke="#555" stroke-width="2.2" fill="none"/></svg>
<svg class="abs" style="left:1550px;top:179px" width="10" height="10"><path d="M3 1l4 4-4 4" stroke="#555" stroke-width="2.2" fill="none"/></svg>
<div class="abs" style="left:507px;top:29px;width:1px;height:166px;background:#8c9bb5"></div>
<div class="abs" style="left:507px;top:194px;width:1076px;height:1px;background:#c8d2e4"></div>
<div class="abs" style="left:507px;top:202px;width:130px;height:20px;background:#2f7dc8"></div>
<div class="t" style="left:528px;top:206px;font-size:12px;color:#fff;">Chart vs. Time</div>
<svg class="abs" style="left:621px;top:206px" width="10" height="10"><path d="M1 1l8 8M9 1l-8 8" stroke="#fff" stroke-width="1.5"/></svg>
<div class="t" style="left:658px;top:206px;font-size:12px;color:#fff;">Chart vs. Time</div>
<div class="t" style="left:788px;top:206px;font-size:12px;color:#fff;">Chart vs. Time</div>
<svg class="abs" style="left:1569px;top:212px" width="10" height="6"><path d="M0.5 0.5h8.5l-4.25 4.5z" fill="#c8c8c8"/></svg>
<div class="abs" style="left:507px;top:221px;width:1076px;height:2px;background:#2f7dc8"></div>
<div class="abs" style="left:507px;top:223px;width:1076px;height:507px;background:#fff"></div>
<div class="abs" style="left:509px;top:224px;width:176px;height:100px;background:radial-gradient(ellipse 115px 135px at 100% 100%, #000066 0%, #00003a 40%, rgba(0,0,22,0.75) 70%, rgba(0,0,0,0) 100%), radial-gradient(ellipse 105px 75px at 0% 100%, #3a3a3a 0%, #1e1e1e 45%, rgba(0,0,0,0) 100%), #000"></div>
<div class="abs" style="left:686px;top:224px;width:819px;height:100px;background:linear-gradient(#000 0%, #010112 50%, #02023a 100%)"></div>
<div class="abs" style="left:1506px;top:224px;width:76px;height:100px;background:radial-gradient(ellipse 62px 105px at 0% 100%, #000066 0%, #00003c 40%, rgba(0,0,20,0.7) 75%, rgba(0,0,0,0) 100%), radial-gradient(ellipse 75px 85px at 100% 100%, #3a3a3a 0%, #1c1c1c 45%, rgba(0,0,0,0) 100%), #000"></div>
<div class="abs" style="left:509px;top:325px;width:176px;height:100px;background:radial-gradient(ellipse 115px 135px at 100% 100%, #000066 0%, #00003a 40%, rgba(0,0,22,0.75) 70%, rgba(0,0,0,0) 100%), radial-gradient(ellipse 105px 75px at 0% 100%, #3a3a3a 0%, #1e1e1e 45%, rgba(0,0,0,0) 100%), #000"></div>
<div class="abs" style="left:686px;top:325px;width:819px;height:100px;background:linear-gradient(#000 0%, #010112 50%, #02023a 100%)"></div>
<div class="abs" style="left:1506px;top:325px;width:76px;height:100px;background:radial-gradient(ellipse 62px 105px at 0% 100%, #000066 0%, #00003c 40%, rgba(0,0,20,0.7) 75%, rgba(0,0,0,0) 100%), radial-gradient(ellipse 75px 85px at 100% 100%, #3a3a3a 0%, #1c1c1c 45%, rgba(0,0,0,0) 100%), #000"></div>
<div class="abs" style="left:509px;top:426px;width:176px;height:100px;background:radial-gradient(ellipse 115px 135px at 100% 100%, #000066 0%, #00003a 40%, rgba(0,0,22,0.75) 70%, rgba(0,0,0,0) 100%), radial-gradient(ellipse 105px 75px at 0% 100%, #3a3a3a 0%, #1e1e1e 45%, rgba(0,0,0,0) 100%), #000"></div>
<div class="abs" style="left:686px;top:426px;width:819px;height:100px;background:linear-gradient(#000 0%, #010112 50%, #02023a 100%)"></div>
<div class="abs" style="left:1506px;top:426px;width:76px;height:100px;background:radial-gradient(ellipse 62px 105px at 0% 100%, #000066 0%, #00003c 40%, rgba(0,0,20,0.7) 75%, rgba(0,0,0,0) 100%), radial-gradient(ellipse 75px 85px at 100% 100%, #3a3a3a 0%, #1c1c1c 45%, rgba(0,0,0,0) 100%), #000"></div>
<div class="abs" style="left:509px;top:527px;width:176px;height:100px;background:radial-gradient(ellipse 115px 135px at 100% 100%, #000066 0%, #00003a 40%, rgba(0,0,22,0.75) 70%, rgba(0,0,0,0) 100%), radial-gradient(ellipse 105px 75px at 0% 100%, #3a3a3a 0%, #1e1e1e 45%, rgba(0,0,0,0) 100%), #000"></div>
<div class="abs" style="left:686px;top:527px;width:819px;height:100px;background:linear-gradient(#000 0%, #010112 50%, #02023a 100%)"></div>
<div class="abs" style="left:1506px;top:527px;width:76px;height:100px;background:radial-gradient(ellipse 62px 105px at 0% 100%, #000066 0%, #00003c 40%, rgba(0,0,20,0.7) 75%, rgba(0,0,0,0) 100%), radial-gradient(ellipse 75px 85px at 100% 100%, #3a3a3a 0%, #1c1c1c 45%, rgba(0,0,0,0) 100%), #000"></div>
<div class="abs" style="left:509px;top:628px;width:176px;height:100px;background:radial-gradient(ellipse 115px 135px at 100% 100%, #000066 0%, #00003a 40%, rgba(0,0,22,0.75) 70%, rgba(0,0,0,0) 100%), radial-gradient(ellipse 105px 75px at 0% 100%, #3a3a3a 0%, #1e1e1e 45%, rgba(0,0,0,0) 100%), #000"></div>
<div class="abs" style="left:686px;top:628px;width:819px;height:100px;background:linear-gradient(#000 0%, #010112 50%, #02023a 100%)"></div>
<div class="abs" style="left:1506px;top:628px;width:76px;height:100px;background:radial-gradient(ellipse 62px 105px at 0% 100%, #000066 0%, #00003c 40%, rgba(0,0,20,0.7) 75%, rgba(0,0,0,0) 100%), radial-gradient(ellipse 75px 85px at 100% 100%, #3a3a3a 0%, #1c1c1c 45%, rgba(0,0,0,0) 100%), #000"></div>
<div class="abs" style="left:507px;top:728px;width:1076px;height:2px;background:#fff"></div>
<div class="abs" style="left:507px;top:730px;width:1076px;height:1px;background:#6f7f9f"></div>
<svg class="abs" style="left:0;top:0" width="1583" height="769">
<line x1="686" x2="1505" y1="249.5" y2="249.5" stroke="#5a5a5a" stroke-width="1"/>
<line x1="686" x2="1505" y1="274.5" y2="274.5" stroke="#5a5a5a" stroke-width="1"/>
<line x1="686" x2="1505" y1="299.5" y2="299.5" stroke="#5a5a5a" stroke-width="1"/>
<line x1="686" x2="1505" y1="350.5" y2="350.5" stroke="#5a5a5a" stroke-width="1"/>
<line x1="686" x2="1505" y1="375.5" y2="375.5" stroke="#5a5a5a" stroke-width="1"/>
<line x1="686" x2="1505" y1="400.5" y2="400.5" stroke="#5a5a5a" stroke-width="1"/>
<line x1="686" x2="1505" y1="451.5" y2="451.5" stroke="#5a5a5a" stroke-width="1"/>
<line x1="686" x2="1505" y1="476.5" y2="476.5" stroke="#5a5a5a" stroke-width="1"/>
<line x1="686" x2="1505" y1="501.5" y2="501.5" stroke="#5a5a5a" stroke-width="1"/>
<line x1="686" x2="1505" y1="552.5" y2="552.5" stroke="#5a5a5a" stroke-width="1"/>
<line x1="686" x2="1505" y1="577.5" y2="577.5" stroke="#5a5a5a" stroke-width="1"/>
<line x1="686" x2="1505" y1="602.5" y2="602.5" stroke="#5a5a5a" stroke-width="1"/>
<line x1="686" x2="1505" y1="653.5" y2="653.5" stroke="#5a5a5a" stroke-width="1"/>
<line x1="686" x2="1505" y1="678.5" y2="678.5" stroke="#5a5a5a" stroke-width="1"/>
<line x1="686" x2="1505" y1="703.5" y2="703.5" stroke="#5a5a5a" stroke-width="1"/>
<line x1="686" x2="1505" y1="341.5" y2="341.5" stroke="#20e020" stroke-width="1" stroke-dasharray="3 2"/>
<line x1="686" x2="1505" y1="661.5" y2="661.5" stroke="#ff9a20" stroke-width="1" stroke-dasharray="3 2"/>
<polyline points="686.6,290.3 701.2,290.3 703.9,291.6 721.1,291.6 722.5,292.4 747.7,292.4 749.5,293.8 751.6,292.4 759.6,292.4 762.2,293.8 764.9,292.4 788.8,291.6 791.4,290.8 815.3,290.8 818.0,290.0 841.8,290.0 844.5,289.2 868.4,289.2 871.0,288.5 881.6,288.5 884.3,289.2 937.4,289.2 941.3,288.2 977.2,288.2 979.8,287.1 1003.7,287.1 1006.3,286.1 1022.3,286.1 1024.9,285.3 1030.2,284.7 1090.0,269.1 1140.4,254.0 1144.4,255.0 1149.7,259.8 1156.3,269.1 1165.6,282.4 1169.6,284.5 1180.2,288.5 1190.8,293.0 1201.4,296.9 1214.7,300.9 1228.0,304.9 1234.6,306.2 1245.2,307.0 1249.2,306.2 1263.8,306.2 1266.4,304.9 1287.7,304.9 1289.0,303.8 1297.0,303.8 1299.6,304.9 1315.5,305.4 1319.5,306.2 1326.1,306.2 1328.8,305.4 1352.7,305.4 1354.0,303.8 1355.3,304.9 1358.0,303.8 1371.2,303.8 1373.9,304.9 1392.5,305.4 1395.1,306.2 1424.3,306.2 1427.0,305.4 1434.9,305.4 1437.6,304.9 1445.5,304.4 1448.2,304.9 1452.2,303.8 1456.1,304.9 1466.8,305.4 1469.4,306.2 1503.9,306.2" fill="none" stroke="#ff1010" stroke-width="2" stroke-linejoin="round"/>
<polyline points="686.6,298.8 694.6,298.8 697.2,299.6 701.2,299.6 703.9,298.3 706.5,299.6 725.1,299.6 726.4,300.4 775.5,300.4 778.2,299.3 816.6,299.3 819.3,298.5 847.2,298.5 849.8,297.5 945.3,297.5 948.0,296.4 950.6,296.4 953.3,297.5 961.2,297.5 963.9,296.4 1001.0,296.4 1003.7,295.4 1022.3,295.4 1024.9,294.3 1030.2,293.5 1090.0,281.6 1133.8,271.7 1140.4,269.9 1145.7,271.7 1151.0,271.7 1153.7,270.4 1188.2,271.7 1190.8,273.1 1204.1,273.1 1206.7,274.4 1228.0,274.4 1230.6,275.2 1249.2,275.2 1251.8,276.2 1265.1,276.2 1267.8,277.0 1278.4,277.0 1281.0,278.4 1298.3,278.4 1300.9,279.7 1324.8,279.7 1327.5,280.5 1351.3,280.5 1354.0,281.6 1369.9,281.6 1372.6,282.6 1399.1,282.6 1401.8,283.7 1424.3,283.7 1427.0,284.5 1438.9,284.5 1441.6,285.5 1453.5,285.5 1456.1,286.3 1470.7,286.3 1473.4,287.7 1492.0,287.7 1494.6,288.5 1503.9,288.5" fill="none" stroke="#ffff00" stroke-width="2" stroke-linejoin="round"/>
<polyline points="686.6,323.5 722.5,323.5 731.7,322.1 737.0,318.7 745.0,318.2 751.6,316.0 759.6,313.4 764.9,312.9 779.5,312.9 780.8,312.1 814.0,312.1 819.3,315.5 828.6,310.7 833.9,308.9 839.2,307.6 845.8,307.0 849.8,308.9 857.8,312.3 865.7,312.9 871.0,314.2 876.3,317.6 884.3,318.2 887.0,318.7 900.2,318.7 908.2,315.0 913.5,314.2 924.1,314.2 930.7,311.8 937.4,310.2 941.3,309.1 945.3,311.3 953.3,311.3 958.6,308.9 966.5,306.2 982.5,306.2 993.1,303.6 1001.0,300.9 1009.0,300.1 1017.0,298.3 1023.6,296.9 1028.9,302.8 1035.5,233.3 1135,233 1140,240 1147,323 1505,323" fill="none" stroke="#00e000" stroke-width="2" stroke-linejoin="round"/>
<polyline points="686.6,421.4 750.3,421.4 751.6,420.0 762.2,419.5 831.2,419.5 832.6,418.4 863.1,418.4 865.7,420.3 867.1,418.7 877.7,420.3 908.2,420.3 909.5,419.0 932.1,419.0 933.4,418.2 974.5,418.2 977.2,417.1 1001.0,417.1 1002.4,416.0 1015.6,415.5 1024.9,414.2 1032.9,407.6 1039.5,398.3 1100.0,373.5 1111.1,368.6 1124.3,362.0 1132.7,362.0 1138.2,358.9 1141.7,360.3 1145.2,365.8 1147.3,386.7 1149.3,411.7 1151.4,420.0 1175.0,420.0 1177.8,421.2 1193.1,421.2 1195.9,422.3 1225.1,422.3 1227.2,423.4 1257.0,423.4 1259.1,422.3 1294.6,422.3 1310.4,422.3 1312.5,423.4 1325.0,423.4 1327.1,422.3 1385.5,422.3 1387.6,423.4 1415.4,423.4 1417.4,422.3 1472.3,422.3 1474.4,423.4 1480.0,423.4 1482.1,422.3 1504.3,422.3" fill="none" stroke="#ffffff" stroke-width="2" stroke-linejoin="round"/>
<polyline points="686.6,390.3 693.3,392.2 699.9,389.5 709.2,393.0 722.5,391.1 727.8,392.2 733.1,390.6 738.4,392.2 745.0,389.5 751.6,390.6 759.6,390.3 766.2,386.3 771.5,380.5 777.6,392.2 783.5,387.7 788.8,381.6 794.1,387.7 815.3,386.3 821.9,384.5 828.6,389.5 841.8,384.2 848.5,386.3 855.1,384.2 865.7,386.3 876.3,387.7 887.0,389.5 902.9,386.3 909.5,391.6 918.8,387.9 924.1,387.1 930.7,390.8 937.4,387.7 942.7,389.5 948.0,384.5 957.3,390.3 965.2,386.3 978.5,384.5 985.1,387.7 998.4,383.7 1002.4,382.4 1007.7,377.0 1013.0,384.2 1023.6,381.6 1030.2,384.7 1036.9,350.5 1042.2,342.0 1056.8,349.2 1062.1,351.8 1068.7,345.7 1074.0,353.2 1080.6,351.8 1087.3,361.1 1095.2,355.8 1097,355 1100.0,358.2 1103.5,363.8 1108.3,356.8 1113.9,361.7 1119.5,363.1 1124.3,370.0 1130.6,356.8 1136.1,369.3 1141.7,370.7 1148.6,395.0 1153.5,392.3 1159.8,392.3 1163.9,393.6 1166.7,393.4 1171.6,389.2 1177.1,395.7 1184.1,389.2 1199.4,389.2 1204.9,384.3 1209.8,387.0 1216.7,389.8 1220.9,389.8 1227.2,386.0 1239.0,386.0 1245.2,384.2 1268.2,384.2 1273.0,381.4 1278.6,388.8 1284.1,386.0 1297.3,386.0 1306.9,387.4 1313.2,389.8 1318.1,386.0 1322.2,387.8 1326.4,387.8 1329.2,386.0 1333.4,387.0 1341.0,390.9 1350.0,386.0 1354.2,386.0 1356.3,387.8 1390.3,387.8 1395.2,389.8 1401.5,387.4 1408.4,387.4 1415.4,384.6 1418.1,384.6 1422.3,386.7 1427.2,382.8 1433.4,384.6 1439.7,381.1 1447.3,384.6 1455.7,384.6 1461.2,388.1 1464.7,386.4 1476.5,386.4 1482.1,384.2 1487.6,387.8 1493.9,381.1 1498.7,378.4 1504.3,381.1" fill="none" stroke="#00e000" stroke-width="2" stroke-linejoin="round"/>
<polyline points="686,502 704,501.7 712,502.8 717,502 735.7,501 749,497.5 762,493.8 778,492 812.7,492 823,494 831,491.6 847,490 860,491.6 881.6,498 903,499 913.5,495.6 934.7,493 961,491.6 987.8,489.8 1009,486.9 1025,483.7 1029,475.7 1033,466.4 1043.5,462 1062,461 1100.0,459.3 1103.5,460.0 1108.3,459.7 1111.1,458.3 1134.7,458.3 1137.5,459.7 1141.0,460.0 1145.9,466.3 1152.1,504.5 1157.0,505.9 1159.8,505.2 1163.9,503.8 1170.9,502.4 1190.3,502.0 1202.8,500.0 1215.4,499.2 1223.7,497.5 1237.6,496.1 1247.3,495.0 1261.2,495.0 1264.0,496.1 1277.9,496.1 1300.0,497.5 1316.7,497.5 1318.8,495.9 1345.9,495.9 1347.9,497.5 1394.5,497.5 1396.6,495.9 1440.4,495.9 1443.1,497.5 1472.3,497.5 1474.4,495.9 1500.1,495.9 1502.2,494.8 1503.6,495.0" fill="none" stroke="#e070e0" stroke-width="2" stroke-linejoin="round"/>
<polyline points="686,454.5 696,457 702.5,450.5 708,456 714.5,457 720,454.5 725,457 730,442.5 747.7,442.5 759.6,449 765,454.5 815,454.5 823,452 834,458.5 846,461 855,456 865.7,454.5 876,446.5 881.6,443 903,442.5 913.5,449 924,452 945,456 958.6,459 966.5,460 993,461 1019.6,465 1026,465.6 1033,490 1100.0,490.6 1145.2,490.6 1150.7,506.6 1157.0,506.6 1169.5,452.4 1175.0,452.4 1190.3,458.6 1197.3,459.7 1202.8,461.7 1223.7,468.4 1233.4,470.0 1240.4,471.4 1255.7,471.4 1258.4,470.0 1266.8,469.7 1269.6,468.6 1273.7,468.6 1276.5,467.8 1283.4,467.8 1286.2,467.0 1294.6,467.0 1300.0,468.1 1306.9,469.7 1315.3,470.4 1321.5,453.8 1327.8,470.4 1336.1,469.7 1343.1,468.1 1351.4,468.1 1353.5,467.2 1372.3,467.2 1375.0,468.4 1383.4,468.4 1386.2,469.7 1394.5,469.7 1397.3,470.9 1426.5,470.9 1429.2,469.5 1434.8,468.4 1440.4,467.2 1450.1,467.2 1452.9,468.4 1465.4,468.4 1468.2,469.5 1476.5,469.5 1479.3,470.9 1503.6,470.9" fill="none" stroke="#ffffff" stroke-width="2" stroke-linejoin="round"/>
<polyline points="686.6,452.4 695.9,454.0 702.6,450.5 709.2,454.5 715.8,452.4 723.8,452.4 733.1,452.4 743.7,452.9 754.3,452.4 764.9,453.4 775.5,454.5 780.8,454.5 786.1,452.4 791.4,454.0 796.7,452.4 804.7,454.5 812.7,452.4 823.3,451.3 831.2,454.0 839.2,454.5 844.5,452.4 860.4,452.4 865.7,454.5 871.0,452.4 881.6,452.4 887.0,454.5 894.9,452.4 902.9,452.4 908.2,451.3 916.1,452.4 924.1,454.5 932.1,452.4 942.7,452.4 948.0,454.5 955.9,452.4 961.2,454.5 969.2,452.4 987.8,452.4 993.1,454.5 1014.3,454.5 1022.3,452.4 1027.6,452.4 1035.5,461.1 1043.5,456.6 1051.5,454.5 1062.1,450.5 1067.4,454.0 1075.3,452.4 1080.6,454.0 1085.9,452.4 1095,454 1100.0,454.5 1119.5,454.5 1123.6,452.4 1148.6,452.4 1152.8,449.6 1159.8,448.2 1164.6,450.3 1205.6,450.3 1209.8,448.2 1214.0,450.3 1234.8,450.3 1239.0,448.2 1243.1,450.3 1273.7,450.3 1278.6,448.2 1283.4,450.6 1289.0,448.2 1293.9,450.3 1300.0,450.6 1306.9,450.6 1311.8,448.2 1347.3,448.2 1351.4,445.8 1357.0,448.2 1373.7,448.2 1379.2,445.8 1384.8,445.8 1388.9,448.2 1401.5,448.2 1405.6,446.1 1411.2,447.8 1416.7,452.8 1422.3,450.6 1427.9,450.3 1432.0,448.2 1439.0,448.2 1444.5,452.4 1450.1,450.3 1476.5,450.3 1482.1,466.7 1487.6,466.7 1493.9,454.5 1498.7,454.5 1503.6,452.4" fill="none" stroke="#ffff00" stroke-width="2" stroke-linejoin="round"/>
<polyline points="686,573 700,572.5 710,574.5 720,573 745,573 755,572 765,574 771,570 778,574 790,572 800,573 820,572 840,572 850,573 860,572 905,572 910,574 920,572 930,574 945,572 955,573 965,571 975,574 990,572 1005,572 1012,570 1020,572 1030,572 1035,565 1042,561 1052,562 1065,564 1075,563 1085,564 1097,565 1100.0,565.9 1102.8,567.2 1107.6,564.0 1113.9,565.4 1124.3,567.5 1129.9,564.0 1135.4,567.5 1141.7,568.9 1147.3,574.8 1152.8,573.4 1158.4,573.4 1165.3,574.8 1171.6,572.4 1176.4,574.8 1182.7,572.4 1200.1,572.4 1204.2,571.4 1208.4,572.4 1239.0,572.4 1245.2,571.0 1272.3,571.0 1278.6,572.4 1294.6,572.4 1300.0,572.4 1333.4,572.4 1340.3,573.8 1347.3,572.4 1411.2,572.4 1416.7,571.4 1422.3,573.1 1427.9,571.0 1476.5,572.4 1482.1,571.0 1487.6,572.8 1497.3,570.6 1504.3,571.4" fill="none" stroke="#ffffff" stroke-width="2" stroke-linejoin="round"/>
<polyline points="686,570 695,569 702,562 706,554.5 713,552.5 717,552 722,557 727,554 735,558 740,565 745,556 750,552 756,552 761,574 770,569 778,563 783,560 788,566 793,567 798,557 805,555 810,558 822,570 830,562 835,564 840,559 845,558 852,563 860,561 870,556 876,569 882,567 888,552 893,551 903,564 910,567 915,579 920,575 925,573 935,564 940,559 943,559 948,566 955,563 957,554 963,563 968,565 973,557 980,558 987,557 992,567 997,559 1002,554 1012,558 1018,566 1025,566 1030,568 1035,591 1042,603 1047,598 1052,604 1057,604 1062,600 1067,600 1072,604 1082,604 1088,601 1093,597 1098,598 1100.0,600.9 1102.8,605.7 1108.3,598.8 1113.2,605.3 1118.8,605.3 1124.3,607.8 1130.6,602.3 1136.1,606.4 1142.4,603.4 1147.9,581.4 1153.5,571.0 1159.1,534.2 1165.3,534.2 1177.1,579.3 1183.4,582.8 1188.3,572.4 1194.5,567.5 1199.4,557.8 1205.6,568.2 1210.5,574.2 1215.4,565.4 1220.9,548.8 1227.2,543.9 1234.1,554.3 1239.0,559.2 1244.5,550.8 1249.4,553.6 1256.3,558.5 1266.8,562.7 1273.7,566.1 1279.3,571.0 1289.0,575.9 1295.3,577.9 1300.0,577.3 1308.3,571.0 1318.1,566.4 1324.3,556.4 1329.2,553.6 1335.4,555.3 1341.0,555.3 1347.3,559.2 1352.8,565.9 1358.4,568.9 1368.8,577.5 1374.4,577.5 1379.9,574.5 1385.5,574.5 1391.0,571.7 1395.9,565.4 1406.3,558.5 1413.3,561.7 1422.3,564.0 1433.4,568.2 1445.9,575.2 1450.1,575.6 1455.7,571.4 1461.2,574.2 1472.3,570.0 1478.6,564.0 1483.4,560.3 1489.0,555.0 1493.2,555.3 1499.4,559.5 1504.3,560.6" fill="none" stroke="#00f0ff" stroke-width="2" stroke-linejoin="round"/>
<polyline points="686,678.6 1026.2,678.6 1031.8,696.0 1035.2,697.8 1042.9,697.8 1045.7,698.8 1055.4,698.8 1058.2,699.8 1065.1,699.8 1067.9,700.6 1074.8,700.6 1077.6,701.6 1084.6,701.6 1087.3,702.5 1097.1,702.5 1100.0,703.0 1143.8,703.0 1150.7,678.6 1504.3,678.6" fill="none" stroke="#ffffff" stroke-width="2" stroke-linejoin="round"/>
<polyline points="686.3,669.6 688.3,667.5 695.3,667.2 699.5,662.7 705.7,655.0 710.6,653.3 716.1,652.0 722.4,657.8 725.9,655.3 729.3,655.7 739.8,663.4 745.3,655.7 750.9,652.9 755.7,652.9 762.7,671.0 771.7,666.1 782.8,658.5 789.8,664.0 795.4,664.0 800.9,656.4 805.1,655.3 813.4,659.9 822.5,668.9 832.9,659.9 838.4,662.7 845.4,658.5 850.9,658.5 860.7,663.4 870.4,656.4 877.3,666.4 882.9,666.4 888.5,652.2 892.6,650.8 892.8,650.8 896.9,655.7 903.9,662.7 909.5,664.7 915.0,675.2 922.0,671.0 926.1,669.6 935.9,658.5 942.1,657.1 948.4,663.4 952.5,662.7 958.1,654.3 963.7,662.0 969.2,664.7 974.8,657.8 985.9,657.1 992.1,664.7 1001.2,655.7 1006.7,655.7 1013.7,658.5 1019.9,664.0 1029.0,664.7 1031.8,667.5 1035.9,685.6 1042.9,695.3 1048.4,692.5 1054.7,697.4 1058.2,697.4 1063.7,694.2 1069.3,694.2 1074.8,696.4 1083.2,696.4 1090.1,693.2 1098.5,692.8 1100.0,693.2 1104.2,698.1 1109.0,693.9 1114.6,698.1 1119.5,698.4 1125.0,700.2 1131.3,696.4 1137.5,699.5 1142.4,696.4 1147.3,682.1 1153.5,670.3 1161.1,636.9 1165.3,636.9 1168.1,641.1 1172.3,659.2 1177.8,674.5 1183.4,678.4 1188.9,670.3 1195.9,664.7 1200.1,658.5 1205.6,664.7 1211.2,670.3 1216.7,663.4 1222.3,648.8 1228.6,645.3 1234.1,652.9 1239.7,657.1 1245.2,651.5 1256.3,658.5 1273.7,664.0 1279.3,668.2 1291.8,674.5 1300.0,673.8 1308.3,668.9 1318.1,665.4 1325.7,655.7 1330.6,653.6 1336.1,655.7 1341.7,655.7 1348.6,659.2 1354.2,664.7 1361.1,668.2 1368.8,674.5 1373.7,674.5 1380.6,671.0 1388.9,670.3 1397.3,662.7 1407.0,657.1 1414.0,659.9 1422.3,662.2 1433.4,665.4 1445.9,672.4 1452.9,672.4 1457.0,669.6 1461.9,671.4 1473.7,666.4 1479.3,661.3 1483.4,659.9 1488.3,655.0 1494.6,655.7 1500.1,658.9 1504.3,659.9" fill="none" stroke="#ff8010" stroke-width="2" stroke-linejoin="round"/>
<polyline points="686.3,689.8 691.1,686.3 695.3,687.3 698.1,684.2 706.4,668.2 712.7,665.4 717.5,665.4 722.4,671.7 727.9,668.2 739.8,680.7 745.3,670.3 750.9,665.4 755.7,665.4 762.7,692.5 766.9,689.1 783.5,673.8 789.8,682.8 794.7,682.8 800.2,670.3 805.1,669.6 816.2,679.3 822.5,689.1 832.9,676.6 838.4,679.3 845.4,673.1 850.2,673.8 860.0,680.7 871.8,671.0 877.3,685.6 882.9,685.6 888.5,664.7 891.9,663.4 893.5,663.4 899.7,674.5 905.3,681.4 909.5,682.8 915.0,698.1 919.9,693.9 926.1,690.5 937.3,673.8 942.1,672.4 948.4,682.1 953.9,679.3 958.8,666.8 963.7,678.6 969.9,682.8 974.8,671.7 980.3,672.4 985.9,671.0 992.1,682.8 997.0,674.5 1003.3,667.5 1012.3,671.7 1019.2,682.1 1026.2,682.1 1031.8,653.6 1035.9,677.3 1042.9,693.9 1047.7,686.3 1054.0,694.6 1058.9,692.5 1065.1,685.6 1070.7,685.6 1075.5,688.4 1081.8,686.3 1087.3,682.8 1092.9,674.5 1098.5,674.5 1100.0,677.3 1103.5,686.3 1109.0,675.9 1114.6,685.6 1119.5,686.3 1125.0,688.4 1131.3,681.4 1136.8,687.0 1142.4,682.1 1145.2,663.4 1151.4,696.0 1154.2,689.8 1161.1,642.5 1165.3,642.5 1168.1,648.1 1172.3,667.5 1177.8,698.1 1183.4,703.7 1188.9,689.8 1194.5,685.6 1200.1,673.1 1205.6,683.5 1211.2,691.8 1216.7,681.4 1222.3,659.9 1228.6,654.3 1234.1,666.8 1240.4,672.4 1245.2,663.4 1250.8,666.8 1256.3,673.1 1273.7,681.4 1280.7,688.4 1289.0,695.3 1300.0,696.7 1308.3,689.1 1318.1,684.2 1325.0,670.3 1330.6,666.4 1335.4,668.2 1341.7,668.6 1347.3,673.1 1352.8,681.4 1361.1,688.4 1368.8,697.8 1375.0,697.8 1380.6,693.7 1390.3,691.1 1397.3,680.7 1407.0,672.4 1414.0,676.6 1422.3,679.3 1433.4,683.5 1445.9,693.9 1450.8,695.3 1456.3,690.0 1461.9,692.5 1472.3,687.0 1477.9,681.4 1484.8,674.5 1489.7,667.8 1494.6,669.6 1500.1,674.2 1504.3,675.2" fill="none" stroke="#ffff00" stroke-width="2" stroke-linejoin="round"/>
<line x1="1132.5" x2="1132.5" y1="224" y2="728" stroke="#fff" stroke-width="1"/>
</svg>
<div class="t" style="left:703px;top:713px;width:80px;text-align:center;font-size:12px;color:#fff;letter-spacing:-0.5px">11:18:54</div>
<div class="t" style="left:785px;top:713px;width:80px;text-align:center;font-size:12px;color:#fff;letter-spacing:-0.5px">11:18:57</div>
<div class="t" style="left:867px;top:713px;width:80px;text-align:center;font-size:12px;color:#fff;letter-spacing:-0.5px">11:19:00</div>
<div class="t" style="left:949px;top:713px;width:80px;text-align:center;font-size:12px;color:#fff;letter-spacing:-0.5px">11:19:03</div>
<div class="t" style="left:1030px;top:713px;width:80px;text-align:center;font-size:12px;color:#fff;letter-spacing:-0.5px">11:19:06</div>
<div class="t" style="left:1113px;top:713px;width:80px;text-align:center;font-size:12px;color:#fff;letter-spacing:-0.5px">11:19:09</div>
<div class="t" style="left:1195px;top:713px;width:80px;text-align:center;font-size:12px;color:#fff;letter-spacing:-0.5px">11:19:12</div>
<div class="t" style="left:1277px;top:713px;width:80px;text-align:center;font-size:12px;color:#fff;letter-spacing:-0.5px">11:19:15</div>
<div class="t" style="left:1359px;top:713px;width:80px;text-align:center;font-size:12px;color:#fff;letter-spacing:-0.5px">11:19:18</div>
<div class="abs" style="left:509px;top:224px;width:176px;height:100px;overflow:hidden"><div class="t" style="right:92px;top:1px;font-size:12px;color:#ff2020;letter-spacing:-0.6px;">RPM (rpm)</div></div>
<div class="abs" style="left:509px;top:224px;width:176px;height:100px;overflow:hidden"><div class="t" style="right:5px;top:1px;font-size:12px;color:#20e020;letter-spacing:-0.6px;">TPS (%)</div></div>
<div class="abs" style="left:509px;top:224px;width:176px;height:100px;overflow:hidden"><div class="t" style="right:94px;top:16px;font-size:22px;color:#ff1a1a;letter-spacing:-0.3px;">5,083</div></div>
<div class="abs" style="left:509px;top:224px;width:176px;height:100px;overflow:hidden"><div class="t" style="right:7px;top:16px;font-size:22px;color:#10e010;letter-spacing:-0.3px;">100.0</div></div>
<div class="abs" style="left:509px;top:224px;width:176px;height:100px;overflow:hidden"><div class="t" style="right:92px;top:43px;font-size:12px;color:#ffff20;letter-spacing:-0.6px;">Speed (mph)</div></div>
<div class="abs" style="left:509px;top:224px;width:176px;height:100px;overflow:hidden"><div class="t" style="right:94px;top:58px;font-size:22px;color:#ffff00;letter-spacing:-0.3px;">83</div></div>
<div class="abs" style="left:509px;top:325px;width:176px;height:100px;overflow:hidden"><div class="t" style="right:92px;top:1px;font-size:12px;color:#20e020;letter-spacing:-0.35px;">Fuel Pressure (%)</div></div>
<div class="abs" style="left:509px;top:325px;width:176px;height:100px;overflow:hidden"><div class="t" style="right:94px;top:16px;font-size:22px;color:#10e010;letter-spacing:-0.3px;">59.0</div></div>
<div class="abs" style="left:509px;top:325px;width:176px;height:100px;overflow:hidden"><div class="t" style="right:92px;top:43px;font-size:12px;color:#ffffff;letter-spacing:-0.6px;">Inj DC (%)</div></div>
<div class="abs" style="left:509px;top:325px;width:176px;height:100px;overflow:hidden"><div class="t" style="right:94px;top:58px;font-size:22px;color:#ffffff;letter-spacing:-0.3px;">63.6</div></div>
<div class="abs" style="left:509px;top:426px;width:176px;height:100px;overflow:hidden"><div class="t" style="right:92px;top:1px;font-size:12px;color:#ff80ff;letter-spacing:-0.6px;">Boost</div></div>
<div class="abs" style="left:509px;top:426px;width:176px;height:100px;overflow:hidden"><div class="t" style="right:5px;top:1px;font-size:12px;color:#ffff20;letter-spacing:-0.6px;">Voltage (V)</div></div>
<div class="abs" style="left:509px;top:426px;width:176px;height:100px;overflow:hidden"><div class="t" style="right:94px;top:16px;font-size:22px;color:#ff80ff;letter-spacing:-0.3px;">5.7</div></div>
<div class="abs" style="left:509px;top:426px;width:176px;height:100px;overflow:hidden"><div class="t" style="right:7px;top:16px;font-size:22px;color:#ffff00;letter-spacing:-0.3px;">13.70</div></div>
<div class="abs" style="left:509px;top:426px;width:176px;height:100px;overflow:hidden"><div class="t" style="right:92px;top:43px;font-size:12px;color:#ffffff;letter-spacing:-0.6px;">Spark (&#176;)</div></div>
<div class="abs" style="left:509px;top:426px;width:176px;height:100px;overflow:hidden"><div class="t" style="right:94px;top:58px;font-size:22px;color:#ffffff;letter-spacing:-0.3px;">18.0</div></div>
<div class="abs" style="left:509px;top:527px;width:176px;height:100px;overflow:hidden"><div class="t" style="right:92px;top:1px;font-size:12px;color:#ffffff;letter-spacing:-0.6px;">EGR (V)</div></div>
<div class="abs" style="left:509px;top:527px;width:176px;height:100px;overflow:hidden"><div class="t" style="right:94px;top:16px;font-size:22px;color:#ffffff;letter-spacing:-0.3px;">3.07</div></div>
<div class="abs" style="left:509px;top:527px;width:176px;height:100px;overflow:hidden"><div class="t" style="right:92px;top:43px;font-size:12px;color:#10f0f8;letter-spacing:-0.6px;">AC Press. (V)</div></div>
<div class="abs" style="left:509px;top:527px;width:176px;height:100px;overflow:hidden"><div class="t" style="right:94px;top:58px;font-size:22px;color:#00f8ff;letter-spacing:-0.3px;">1.19</div></div>
<div class="abs" style="left:509px;top:628px;width:176px;height:100px;overflow:hidden"><div class="t" style="right:92px;top:1px;font-size:12px;color:#ffffff;letter-spacing:-0.6px;">EQ Cmd (&#955;)</div></div>
<div class="abs" style="left:509px;top:628px;width:176px;height:100px;overflow:hidden"><div class="t" style="right:5px;top:1px;font-size:12px;color:#ff8020;letter-spacing:-0.6px;">WB Lambda (&#955;)</div></div>
<div class="abs" style="left:509px;top:628px;width:176px;height:100px;overflow:hidden"><div class="t" style="right:94px;top:16px;font-size:22px;color:#ffffff;letter-spacing:-0.3px;">0.752</div></div>
<div class="abs" style="left:509px;top:628px;width:176px;height:100px;overflow:hidden"><div class="t" style="right:7px;top:16px;font-size:22px;color:#ff8020;letter-spacing:-0.3px;">0.73</div></div>
<div class="abs" style="left:509px;top:628px;width:176px;height:100px;overflow:hidden"><div class="t" style="right:92px;top:43px;font-size:12px;color:#ffff20;letter-spacing:-0.6px;">WB error</div></div>
<div class="abs" style="left:509px;top:628px;width:176px;height:100px;overflow:hidden"><div class="t" style="right:94px;top:58px;font-size:22px;color:#ffff00;letter-spacing:-0.3px;">-2.27</div></div>
<div class="t" style="left:1508px;top:225px;font-size:12px;color:#ff2020;letter-spacing:-0.5px">7,500</div>
<div class="t" style="left:1541px;top:225px;font-size:12px;color:#ffff20;letter-spacing:-0.5px">160</div>
<div class="t" style="left:1562px;top:225px;font-size:12px;color:#20e020;letter-spacing:-0.5px">110</div>
<div class="t" style="left:1508px;top:268px;font-size:12px;color:#ff2020;letter-spacing:-0.5px">3,750</div>
<div class="t" style="left:1541px;top:268px;font-size:12px;color:#ffff20;letter-spacing:-0.5px">80</div>
<div class="t" style="left:1562px;top:268px;font-size:12px;color:#20e020;letter-spacing:-0.5px">55</div>
<div class="t" style="left:1508px;top:311px;font-size:12px;color:#ff2020;letter-spacing:-0.5px">0</div>
<div class="t" style="left:1541px;top:311px;font-size:12px;color:#ffff20;letter-spacing:-0.5px">0</div>
<div class="t" style="left:1562px;top:311px;font-size:12px;color:#20e020;letter-spacing:-0.5px">0</div>
<div class="t" style="left:1508px;top:326px;font-size:12px;color:#20e020;letter-spacing:-0.5px">70</div>
<div class="t" style="left:1524px;top:326px;font-size:12px;color:#fff;letter-spacing:-0.5px">100</div>
<div class="t" style="left:1508px;top:369px;font-size:12px;color:#20e020;letter-spacing:-0.5px">55</div>
<div class="t" style="left:1524px;top:369px;font-size:12px;color:#fff;letter-spacing:-0.5px">50</div>
<div class="t" style="left:1508px;top:412px;font-size:12px;color:#20e020;letter-spacing:-0.5px">40</div>
<div class="t" style="left:1524px;top:412px;font-size:12px;color:#fff;letter-spacing:-0.5px">0</div>
<div class="t" style="left:1508px;top:427px;font-size:12px;color:#ff80ff;letter-spacing:-0.5px">18</div>
<div class="t" style="left:1524px;top:427px;font-size:12px;color:#fff;letter-spacing:-0.5px">50</div>
<div class="t" style="left:1540px;top:427px;font-size:12px;color:#ffff20;letter-spacing:-0.5px">15.0</div>
<div class="t" style="left:1508px;top:470px;font-size:12px;color:#ff80ff;letter-spacing:-0.5px">-1</div>
<div class="t" style="left:1524px;top:470px;font-size:12px;color:#fff;letter-spacing:-0.5px">25</div>
<div class="t" style="left:1540px;top:470px;font-size:12px;color:#ffff20;letter-spacing:-0.5px">12.5</div>
<div class="t" style="left:1508px;top:513px;font-size:12px;color:#ff80ff;letter-spacing:-0.5px">-200</div>
<div class="t" style="left:1540px;top:513px;font-size:12px;color:#ffff20;letter-spacing:-0.5px">10.0</div>
<div class="t" style="left:1508px;top:528px;font-size:12px;color:#fff;letter-spacing:-0.5px">5.0</div>
<div class="t" style="left:1526px;top:528px;font-size:12px;color:#20e0f0;letter-spacing:-0.5px">5.0</div>
<div class="t" style="left:1508px;top:571px;font-size:12px;color:#fff;letter-spacing:-0.5px">2.5</div>
<div class="t" style="left:1526px;top:571px;font-size:12px;color:#20e0f0;letter-spacing:-0.5px">2.5</div>
<div class="t" style="left:1508px;top:614px;font-size:12px;color:#fff;letter-spacing:-0.5px">0.0</div>
<div class="t" style="left:1526px;top:614px;font-size:12px;color:#20e0f0;letter-spacing:-0.5px">0.0</div>
<div class="t" style="left:1508px;top:629px;font-size:12px;color:#fff;letter-spacing:-0.5px">1.5</div>
<div class="t" style="left:1526px;top:629px;font-size:12px;color:#ffff20;letter-spacing:-0.5px">25</div>
<div class="t" style="left:1543px;top:629px;font-size:12px;color:#ff8020;letter-spacing:-0.5px">1.3</div>
<div class="t" style="left:1508px;top:672px;font-size:12px;color:#fff;letter-spacing:-0.5px">1.0</div>
<div class="t" style="left:1526px;top:672px;font-size:12px;color:#ffff20;letter-spacing:-0.5px">0</div>
<div class="t" style="left:1543px;top:672px;font-size:12px;color:#ff8020;letter-spacing:-0.5px">0.9</div>
<div class="t" style="left:1508px;top:715px;font-size:12px;color:#fff;letter-spacing:-0.5px">0.5</div>
<div class="t" style="left:1526px;top:715px;font-size:12px;color:#ffff20;letter-spacing:-0.5px">-25</div>
<div class="t" style="left:1542px;top:715px;font-size:12px;color:#ff8020;letter-spacing:-0.5px">0.5</div>
</body></html>
